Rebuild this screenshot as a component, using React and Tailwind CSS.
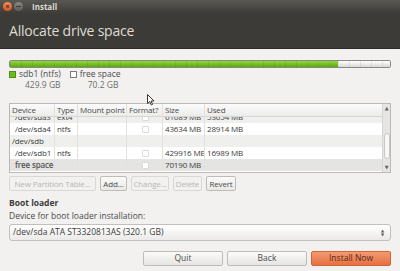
import React from "react";

const rows = [
  { dev: "/dev/sda3", type: "ext4", fmt: true, size: "61689 MB", used: "53654 MB", bg: "bg-[#efefee]", indent: true },
  { dev: "/dev/sda4", type: "ntfs", fmt: true, size: "43634 MB", used: "28914 MB", bg: "bg-white", indent: true },
  { dev: "/dev/sdb", type: "", fmt: false, size: "", used: "", bg: "bg-[#efefee]", indent: false },
  { dev: "/dev/sdb1", type: "ntfs", fmt: true, size: "429916 MB", used: "16989 MB", bg: "bg-white", indent: true },
  { dev: "free space", type: "", fmt: true, size: "70190 MB", used: "", bg: "bg-[#e4e4e3]", indent: true, sel: true },
];

function Cell({ w, children, className = "" }) {
  return (
    <div className={`${w} shrink-0 h-full flex items-center border-r border-[#e2e1df] pl-[2px] overflow-hidden whitespace-nowrap ${className}`}>
      {children}
    </div>
  );
}

function Check({ on }) {
  if (!on) return null;
  return <div className="mx-auto w-[7px] h-[7px] border border-[#dcdbd9] bg-white rounded-[1px]" />;
}

function Btn({ children, disabled, className = "" }) {
  return (
    <div
      className={`h-[15px] flex items-center justify-center whitespace-nowrap rounded-[2px] border ${
        disabled
          ? "border-[#d9d8d6] text-[#b8b6b3] bg-[#f2f1f0]"
          : "border-[#bfbcb8] text-[#4c4c4c] bg-gradient-to-b from-[#fbfbfa] to-[#e9e8e6]"
      } ${className}`}
    >
      {children}
    </div>
  );
}

export default function App() {
  return (
    <div
      className="relative w-[400px] h-[271px] overflow-hidden bg-[#f2f1f0] text-[#3c3c3c]"
      style={{ fontFamily: '"Open Sans", "DejaVu Sans", sans-serif' }}
    >
      {/* title bar */}
      <div className="h-[13px] bg-gradient-to-b from-[#5a5853] to-[#3e3d39] flex items-center pl-[3px]">
        <div className="w-[9px] h-[9px] rounded-full bg-gradient-to-b from-[#f5895a] to-[#d9541f] flex items-center justify-center">
          <span className="text-[7px] leading-none text-[#3c2a22] font-bold">×</span>
        </div>
        <div className="ml-[2px] w-[9px] h-[9px] rounded-full bg-gradient-to-b from-[#8b8983] to-[#5d5b56] flex items-center justify-center">
          <div className="w-[5px] h-[1px] bg-[#3c3b37]" />
        </div>
        <span className="ml-[9px] text-[8px] font-bold text-[#dfdbd2] leading-none">Install</span>
      </div>

      {/* header */}
      <div className="h-[36px] bg-[#3c3b37] border-b border-[#2b2a27] flex items-center pl-[9px]">
        <span className="text-[14px] text-[#dfdbd2] leading-none tracking-[-0.2px]">Allocate drive space</span>
      </div>

      <div className="px-[9px] pt-[11px] text-[8px] leading-none">
        {/* partition bar */}
        <div className="h-[8px] flex rounded-[2px] border border-[#8a8886] overflow-hidden">
          <div
            className="w-[328px]"
            style={{
              backgroundImage:
                "repeating-linear-gradient(90deg, rgba(0,0,0,0.07) 0 1px, transparent 1px 11px), linear-gradient(#92d83c, #5ca90f)",
            }}
          />
          <div
            className="flex-1"
            style={{
              backgroundImage:
                "repeating-linear-gradient(90deg, rgba(0,0,0,0.07) 0 1px, transparent 1px 11px), linear-gradient(#ffffff, #d8d8d8)",
            }}
          />
        </div>

        {/* legend */}
        <div className="flex mt-[2px] text-[#4a4a4a]">
          <div className="flex">
            <div className="w-[7px] h-[7px] bg-[#6cbd1c] border border-[#4f8f10] mt-[1px]" />
            <div className="ml-[3px]">
              <div className="text-[8.5px]">sdb1 (ntfs)</div>
              <div className="text-[8.5px] text-[#6d6d6d] mt-[2px] ml-[6px]">429.9 GB</div>
            </div>
          </div>
          <div className="flex ml-[9px]">
            <div className="w-[7px] h-[7px] bg-white border border-[#7a7a7a] mt-[1px]" />
            <div className="ml-[3px]">
              <div className="text-[8.5px]">free space</div>
              <div className="text-[8.5px] text-[#6d6d6d] mt-[2px] ml-[8px]">70.2 GB</div>
            </div>
          </div>
        </div>

        {/* table */}
        <div className="mt-[14px] flex border border-[#bcb9b4] bg-white h-[70px] text-[8px] tracking-[-0.15px]">
          <div className="flex-1 flex flex-col overflow-hidden">
            <div className="h-[13px] shrink-0 flex items-center bg-gradient-to-b from-[#fbfbfb] to-[#ececeb] border-b border-[#d7d6d4] text-[#4a4a4a]">
              <Cell w="w-[45px]">Device</Cell>
              <Cell w="w-[23px]">Type</Cell>
              <Cell w="w-[49px]">Mount point</Cell>
              <Cell w="w-[36px]">Format?</Cell>
              <Cell w="w-[42px]">Size</Cell>
              <div className="flex-1 pl-[2px]">Used</div>
            </div>
            {/* scrolled list: first row partly hidden */}
            <div className="flex-1 overflow-hidden">
              <div className="-mt-[6px] flex flex-col">
                {rows.map((r) => (
                  <div key={r.dev} className={`h-[12px] flex items-center ${r.bg}`}>
                    <Cell w="w-[45px]" className={`${r.indent ? "pl-[5px]" : "pl-[2px]"} ${r.sel ? "font-semibold text-[#555]" : ""}`}>{r.dev}</Cell>
                    <Cell w="w-[23px]">{r.type}</Cell>
                    <Cell w="w-[49px]" />
                    <Cell w="w-[36px]"><Check on={r.fmt} /></Cell>
                    <Cell w="w-[42px]">{r.size}</Cell>
                    <div className="flex-1 pl-[2px]">{r.used}</div>
                  </div>
                ))}
              </div>
            </div>
          </div>
          {/* scrollbar */}
          <div className="w-[8px] shrink-0 border-l border-[#d7d6d4] bg-[#e6e5e3] flex flex-col items-center justify-between py-[2px]">
            <span className="text-[5px] leading-none text-[#666]">▲</span>
            <div className="w-[6px] h-[26px] mt-[16px] rounded-[3px] bg-[#f7f7f6] border border-[#c9c7c4]" />
            <span className="text-[5px] leading-none text-[#666]">▼</span>
          </div>
        </div>

        {/* partition buttons */}
        <div className="flex mt-[3px] gap-[4px] text-[8px] tracking-[-0.15px]">
          <Btn disabled className="w-[87px]">New Partition Table...</Btn>
          <Btn className="w-[27px]">Add...</Btn>
          <Btn disabled className="w-[38px]">Change...</Btn>
          <Btn disabled className="w-[29px]">Delete</Btn>
          <Btn className="w-[30px]">Revert</Btn>
        </div>

        {/* boot loader */}
        <div className="mt-[8px] text-[8.5px] font-bold text-[#3c3c3c]">Boot loader</div>
        <div className="mt-[4px] text-[8.5px] text-[#4a4a4a]">Device for boot loader installation:</div>
        <div className="mt-[4px] h-[17px] flex items-center justify-between px-[3px] rounded-[3px] border border-[#c3c0bc] bg-gradient-to-b from-white to-[#ebeae8] text-[8.5px] text-[#3c3c3c]">
          <span>/dev/sda ATA ST3320813AS (320.1 GB)</span>
          <span className="flex flex-col text-[4px] leading-[4px] text-[#555] pr-[3px]">
            <span>▲</span>
            <span>▼</span>
          </span>
        </div>

        {/* bottom buttons */}
        <div className="flex justify-end gap-[4px] mt-[10px] text-[8.5px]">
          <div className="w-[80px] h-[15px] flex items-center justify-center rounded-[2px] border border-[#bfbcb8] bg-gradient-to-b from-[#fbfbfa] to-[#e6e5e3] text-[#4c4c4c]">Quit</div>
          <div className="w-[80px] h-[15px] flex items-center justify-center rounded-[2px] border border-[#bfbcb8] bg-gradient-to-b from-[#fbfbfa] to-[#e6e5e3] text-[#4c4c4c]">Back</div>
          <div className="w-[80px] h-[15px] flex items-center justify-center rounded-[2px] border border-[#d0643a] bg-gradient-to-b from-[#f59a72] to-[#e4703f] text-[#5a2a14]">Install Now</div>
        </div>
      </div>

      {/* mouse cursor */}
      <svg className="absolute left-[147px] top-[94px]" width="8" height="12" viewBox="0 0 8 12">
        <path d="M0.5 0.5 L0.5 9.5 L2.7 7.6 L4.3 11 L5.6 10.4 L4 7 L7 7 Z" fill="#fff" stroke="#222" strokeWidth="0.9" strokeLinejoin="round" />
      </svg>
    </div>
  );
}
